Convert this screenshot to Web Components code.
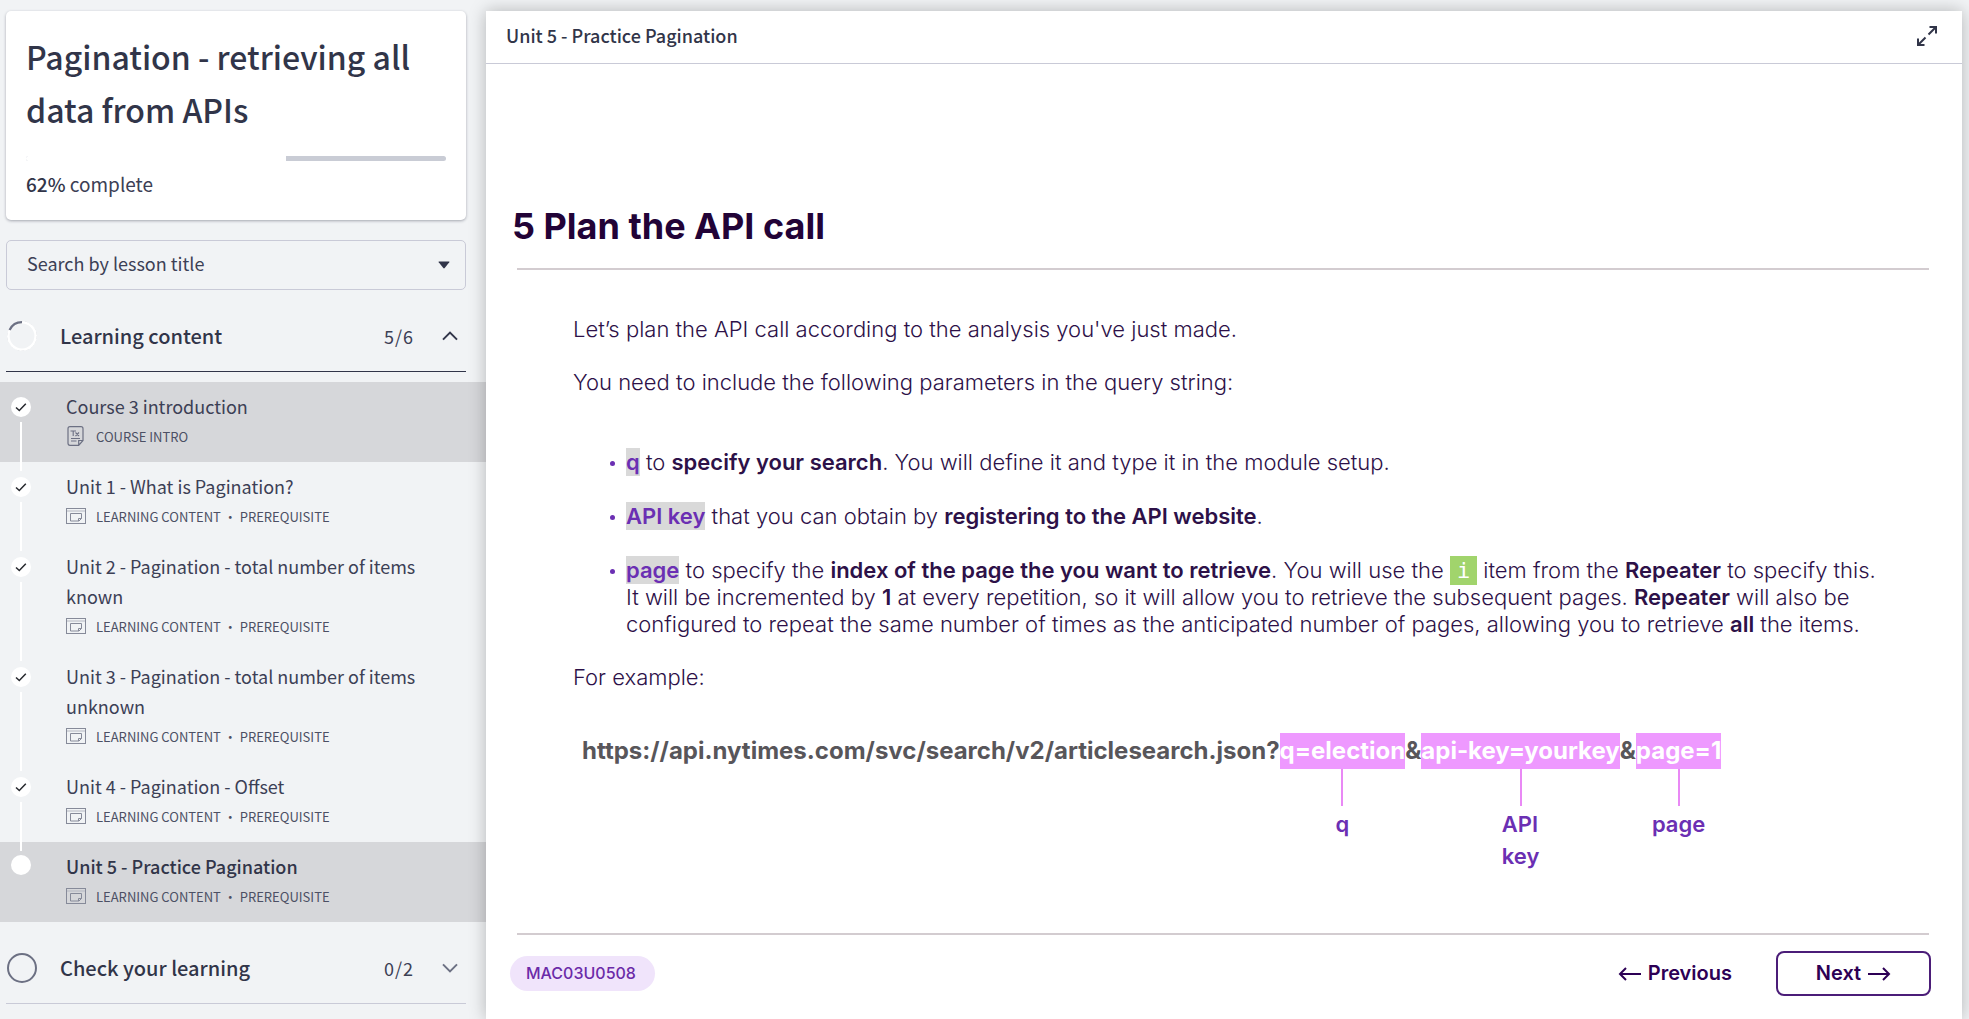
<!DOCTYPE html>
<html lang="en">
<head>
<meta charset="utf-8">
<title>Unit 5 - Practice Pagination</title>
<style>
  html, body { margin: 0; padding: 0; }
  body {
    --ui: "Noto Sans CJK SC", "Noto Sans", sans-serif;
    --slide: Inter, "Liberation Sans", sans-serif;
    --ink: #313549;
    --rule: #c9cad7;
    background: #f1f3f5;
    color: var(--ink);
    font-family: var(--ui);
    font-size: 18px;
  }
</style>
</head>
<body>
<course-page>
  <course-nav slot="nav">
    <course-card percent="62">Pagination - retrieving all data from APIs</course-card>
    <lesson-search></lesson-search>
    <lesson-section heading="Learning content" count="5/6" progress="83" open>
      <lesson-item heading="Course 3 introduction" meta="COURSE INTRO" kind="text" done shaded></lesson-item>
      <lesson-item heading="Unit 1 - What is Pagination?" meta="LEARNING CONTENT · PREREQUISITE" done></lesson-item>
      <lesson-item heading="Unit 2 - Pagination - total number of items known" meta="LEARNING CONTENT · PREREQUISITE" done></lesson-item>
      <lesson-item heading="Unit 3 - Pagination - total number of items unknown" meta="LEARNING CONTENT · PREREQUISITE" done></lesson-item>
      <lesson-item heading="Unit 4 - Pagination - Offset" meta="LEARNING CONTENT · PREREQUISITE" done></lesson-item>
      <lesson-item heading="Unit 5 - Practice Pagination" meta="LEARNING CONTENT · PREREQUISITE" current shaded></lesson-item>
    </lesson-section>
    <lesson-section heading="Check your learning" count="0/2" progress="0"></lesson-section>
  </course-nav>
  <unit-viewer slot="viewer" heading="Unit 5 - Practice Pagination">
    <course-slide heading="5 Plan the API call" code="MAC03U0508">
      <slide-text></slide-text>
      <url-example slot="example">
        <url-part>https://api.nytimes.com/svc/search/v2/articlesearch.json?</url-part>
        <url-part label="q">q=election</url-part>
        <url-part>&amp;</url-part>
        <url-part label="API key">api-key=yourkey</url-part>
        <url-part>&amp;</url-part>
        <url-part label="page">page=1</url-part>
      </url-example>
    </course-slide>
  </unit-viewer>
</course-page>

<script>
const define = (name, render) => customElements.define(name, class extends HTMLElement {
  connectedCallback() {
    if (this.shadowRoot) return;
    this.attachShadow({ mode: "open" }).innerHTML =
      `<style>*, *::before { box-sizing: border-box; }</style>` + render(this);
  }
});

define("course-page", () => `
  <style>
    :host { display: grid; grid-template-columns: minmax(300px, 486px) minmax(0, 1fr); min-height: 100vh; }
    ::slotted([slot=viewer]) { margin: 11px 7px 0 0; }
  </style>
  <slot name="nav"></slot><slot name="viewer"></slot>`);

define("course-nav", () => `
  <style>:host { display: block; padding-top: 11px; }</style>
  <slot></slot>`);

define("course-card", el => `
  <style>
    :host { display: block; margin: 0 20px 0 6px; padding: 19px 20px 21px; background: #fff;
      border-radius: 5px; box-shadow: 0 1px 3px rgba(49, 53, 73, .4); }
    h1 { margin: 0 0 20px; font-size: 32px; line-height: 53px; font-weight: 500; }
    .bar { height: 5px; border-radius: 3px; background: #c9ccd5; overflow: hidden; }
    .fill { height: 100%; width: ${el.getAttribute("percent")}%; background: #fff; }
    p { margin: 8px 0 0; line-height: 30px; font-size: 19px; color: #3c4055; }
    b { font-weight: 500; color: var(--ink); }
  </style>
  <h1><slot></slot></h1>
  <div class="bar"><div class="fill"></div></div>
  <p><b>${el.getAttribute("percent")}%</b> complete</p>`);

define("lesson-search", () => `
  <style>
    :host { display: grid; margin: 20px 20px 0 6px; align-items: center; }
    select, svg { grid-area: 1 / 1; }
    select { appearance: none; width: 100%; height: 50px; margin: 0; padding: 0 44px 4px 20px;
      font: 18px/30px var(--ui); color: #3c4055; background: transparent;
      border: 1px solid var(--rule); border-radius: 5px; }
    svg { justify-self: end; margin-right: 16px; pointer-events: none; }
  </style>
  <select aria-label="Search by lesson title"><option>Search by lesson title</option></select>
  <svg width="12" height="8" viewBox="0 0 12 8"><path d="M1 .5h10q.8 0 .3.7L6.7 7q-.7.8-1.4 0L.7 1.2Q.2.5 1 .5z" fill="#313549"/></svg>`);

define("lesson-section", el => {
  const open = el.hasAttribute("open");
  const progress = Number(el.getAttribute("progress"));
  const ring = progress
    ? `<circle cx="15" cy="15" r="14.3" fill="none" stroke="#c6c8cf" stroke-width="1" stroke-dasharray="3 2"/>
       <circle cx="15" cy="15" r="13.6" fill="none" stroke="#fff" stroke-width="2.4"/>
       <path d="M2.6 9A13.8 13.8 0 0 1 15 1.2" fill="none" stroke="#6c7083" stroke-width="2.2"/>`
    : `<circle cx="15" cy="15" r="14" fill="none" stroke="#6c7083" stroke-width="2"/>`;
  return `
  <style>
    :host { display: block; }
    button { display: flex; align-items: center; width: calc(100% - 26px); height: 71px; margin: 11px 20px 0 6px;
      padding: 0 8px 0 1px; border: 0; border-bottom: 1px solid ${open ? "#313549" : "var(--rule)"};
      background: none; color: var(--ink); font: 500 20px/30px var(--ui); text-align: left; }
    .name { flex: 1; margin-left: 23px; }
    .count { font-size: 18px; font-weight: 400; letter-spacing: 1px; margin-right: 28px; color: #3c4055; }
    .items { padding-top: 10px; }
  </style>
  <button aria-expanded="${open}">
    <svg width="30" height="30" viewBox="0 0 30 30">${ring}</svg>
    <span class="name">${el.getAttribute("heading")}</span>
    <span class="count">${el.getAttribute("count")}</span>
    <svg width="16" height="10" viewBox="0 0 16 10"><path d="${open ? "M1 8.6L8 1.6L15 8.6" : "M1 1.4L8 8.4L15 1.4"}" fill="none" stroke="${open ? "#313549" : "#6c7083"}" stroke-width="2"/></svg>
  </button>
  ${open ? `<div class="items"><slot></slot></div>` : ""}`;
});

const metaIcons = {
  text: `<svg width="20" height="20" viewBox="0 0 20 20" fill="none" stroke="#6c7083">
    <path d="M4 .7h11q2 0 2 2v11.8l-4.3 4.8H4q-2 0-2-2V2.700q0-2 2-2z M12.700 19.300v-4.800h4.300" stroke-width="1.200"/>
    <path d="M4.500 5h5.500M7.200 5v5M9.500 6.500l3.500 3.500M13 6.500l-3.500 3.500M5 12.500h9M5 15h5.500" stroke-width="1.100"/></svg>`,
  page: `<svg width="20" height="16" viewBox="0 0 20 16" fill="none" stroke="#868a99">
    <rect x=".5" y=".5" width="19" height="15"/><path d="M1 3h18" stroke="#b4b7c1"/>
    <path d="M4.500 5.500h11v5l-2.500 2.500H4.500zM12.500 13v-2.500h3"/></svg>`
};

define("lesson-item", el => `
  <style>
    :host { display: block; background: ${el.hasAttribute("shaded") ? "#d6d7da" : "transparent"}; }
    a { display: grid; grid-template-columns: 20px minmax(0, 1fr); column-gap: 35px;
      padding: 0 48px 11px 11px; color: inherit; text-decoration: none; }
    .track { display: flex; flex-direction: column; align-items: center; gap: 5px;
      margin-bottom: -20px; padding-top: 15px; }
    [aria-current] .track { padding-top: 13px; }
    .line { flex: 1; width: 2px; background: #fff; }
    .body { padding-top: 9px; }
    .name { font-size: 18px; line-height: 30px; color: #3c4055; }
    [aria-current] .name { font-weight: 500; color: var(--ink); }
    .meta { display: flex; align-items: center; gap: 10px; height: 30px; font-size: 13px; color: #4c5064; }
    .meta svg { width: 20px; }
  </style>
  <a href="#"${el.hasAttribute("current") ? ` aria-current="page"` : ""}>
    <span class="track">
      <svg width="20" height="20" viewBox="0 0 20 20"><circle cx="10" cy="10" r="10" fill="#fff"/>
        ${el.hasAttribute("done") ? `<path d="M5 10.500L8.300 13.500L14.800 6.700" fill="none" stroke="#26282e" stroke-width="1.500"/>` : ""}</svg>
      ${el.hasAttribute("current") ? "" : `<span class="line"></span>`}
    </span>
    <span class="body">
      <div class="name">${el.getAttribute("heading")}</div>
      <div class="meta">${metaIcons[el.getAttribute("kind") || "page"]}<span>${el.getAttribute("meta")}</span></div>
    </span>
  </a>`);

define("unit-viewer", el => `
  <style>
    :host { display: flex; flex-direction: column; background: #fff; box-shadow: 0 0 16px rgba(0, 0, 0, .26); }
    header { display: flex; align-items: center; justify-content: space-between; height: 53px;
      padding: 0 25px 2px 20px; border-bottom: 1px solid var(--rule); }
    h2 { margin: 0; font-size: 18px; line-height: 30px; font-weight: 500; padding-bottom: 2px; }
    button { display: flex; padding: 0; border: 0; background: none; }
    ::slotted(*) { flex: 1; }
  </style>
  <header>
    <h2>${el.getAttribute("heading")}</h2>
    <button aria-label="Full screen">
      <svg width="20" height="20" viewBox="0 0 20 20" fill="none" stroke="#313549" stroke-width="2"><path d="M12.500 1H19V7.500M18.500 1.500L11.500 8.500M1 12.500V19H7.500M1.500 18.500L8.500 11.500"/></svg>
    </button>
  </header>
  <slot></slot>`);

define("course-slide", el => `
  <style>
    :host { display: flex; flex-direction: column; padding: 134px 31px 23px 24px;
      font-family: var(--slide); color: #2d1148; }
    h1 { margin: 0 0 0 2px; font-size: 36px; line-height: 56px; font-weight: 700; color: #220337; }
    h1, .body { flex: none; }
    hr { width: calc(100% - 9px); height: 2px; margin: 0 0 0 7px; border: 0; background: #d3ccd0; }
    h1 + hr { margin-top: 14px; }
    .body { padding: 46px 0 0 63px; }
    .end { margin-top: auto; }
    footer { display: flex; align-items: center; margin-top: 16px; }
    .code { margin-right: auto; padding: 0 19px 0 16px; border-radius: 18px; background: #f0e4fb;
      color: #6b2aa8; font-size: 16px; line-height: 35px; font-weight: 500; }
    button { display: flex; align-items: center; justify-content: center; gap: 7px; height: 45px; padding: 0; border: 0;
      background: none; color: #2d0055; font: 600 20px/45px var(--slide); }
    .next { width: 155px; margin-left: 44px; border: 2px solid #4b1d78; border-radius: 8px; }
    path { fill: none; stroke: #2d0055; stroke-width: 2; }
  </style>
  <h1>${el.getAttribute("heading")}</h1>
  <hr>
  <div class="body"><slot></slot><slot name="example"></slot></div>
  <hr class="end">
  <footer>
    <span class="code">${el.getAttribute("code")}</span>
    <button><svg width="23" height="14" viewBox="0 0 23 14"><path d="M23 7H2M8 1L2 7L8 13"/></svg>Previous</button>
    <button class="next">Next<svg width="23" height="14" viewBox="0 0 23 14"><path d="M0 7H21M15 1L21 7L15 13"/></svg></button>
  </footer>`);

define("slide-text", () => `
  <style>
    :host { display: block; font-size: 22px; line-height: 27px; font-weight: 300; }
    p { margin: 0 0 26px; }
    ul { margin: 53px 0 26px; padding: 0 0 0 53px; }
    li { margin-bottom: 27px; list-style: none; display: flex; }
    li:last-child { margin-bottom: 0; }
    li::before { content: ""; flex: none; width: 5px; height: 5px; margin: 12px 11px 0 -16px; border-radius: 50%; background: #6b2fb3; }
    b { font-weight: 600; }
    mark { padding: 1px 0; background: #d9d9d9; color: #6b2fb3; font-weight: 600; }
    code { padding: 2px 7px; background: #a1d46c; color: #fff; font: 22px/27px "DejaVu Sans Mono", monospace; }
  </style>
  <p>Let’s plan the API call according to the analysis you've just made.</p>
  <p>You need to include the following parameters in the query string:</p>
  <ul>
    <li><span><mark>q</mark> to <b>specify your search</b>. You will define it and type it in the module setup.</span></li>
    <li><span><mark>API key</mark> that you can obtain by <b>registering to the API website</b>.</span></li>
    <li><span><mark>page</mark> to specify the <b>index of the page the you want to retrieve</b>. You will use the <code>i</code> item from the <b>Repeater</b> to specify this.<br>It will be incremented by <b>1</b> at every repetition, so it will allow you to retrieve the subsequent pages. <b>Repeater</b> will also be<br>configured to repeat the same number of times as the anticipated number of pages, allowing you to retrieve <b>all</b> the items.</span></li>
  </ul>
  <p>For example:</p>`);

define("url-example", () => `
  <style>:host { display: flex; align-items: flex-start; margin: 42px 0 0 9px; }</style>
  <slot></slot>`);

define("url-part", el => `
  <style>
    :host { display: flex; flex-direction: column; align-items: center; flex: none;
      font-size: 24px; line-height: 36px; font-weight: 700; color: #58565a; }
    mark { background: #ee99ff; color: #fff; }
    .line { width: 2px; height: 37px; background: #e989f5; }
    .label { width: min-content; margin-top: 2px; font-size: 22px; line-height: 32px; font-weight: 600; color: #6b2fb3; }
  </style>
  ${el.hasAttribute("label")
    ? `<mark><slot></slot></mark><span class="line"></span><span class="label">${el.getAttribute("label")}</span>`
    : `<slot></slot>`}`);
</script>
</body>
</html>
